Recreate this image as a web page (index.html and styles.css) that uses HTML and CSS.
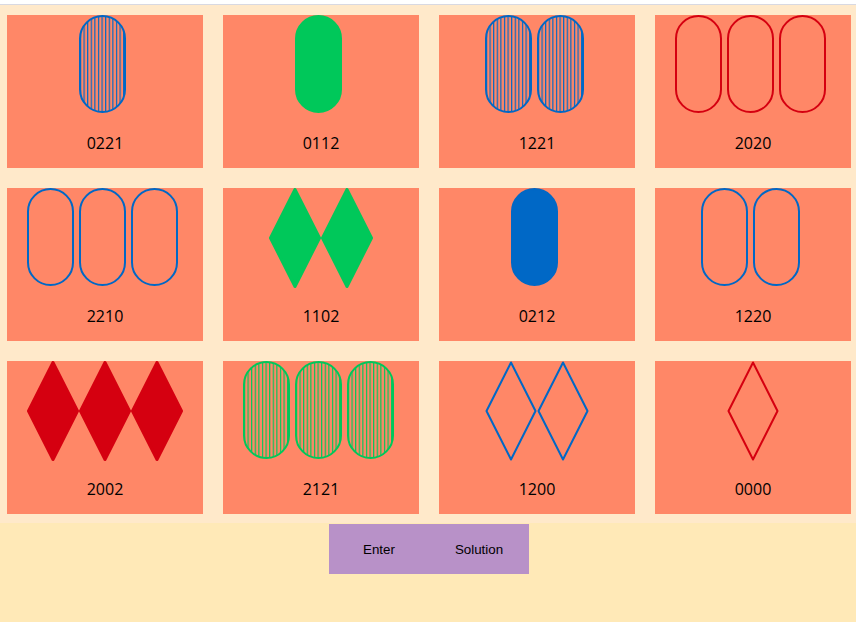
FILE: index.html
```html
<!DOCTYPE html>
<html>
<head>
<meta charset="utf-8">
<link rel="stylesheet" href="styles.css">
</head>
<body>
<svg class="defs" width="0" height="0">
  <defs>
    <pattern id="stripe-blue" patternUnits="userSpaceOnUse" width="3.6" height="4">
      <line x1="1.5" y1="0" x2="1.5" y2="4" stroke="#0068c6" stroke-width="1.2"/>
    </pattern>
    <pattern id="stripe-green" patternUnits="userSpaceOnUse" width="3.6" height="4">
      <line x1="1.5" y1="0" x2="1.5" y2="4" stroke="#00c85a" stroke-width="1.2"/>
    </pattern>
    <symbol id="pill" viewBox="0 0 52 98">
      <rect x="1" y="1" width="45" height="96" rx="22.5" ry="22.5"/>
    </symbol>
    <symbol id="diamond" viewBox="0 0 52 100">
      <polygon points="26,1.5 50.5,50 26,98.5 1.5,50"/>
    </symbol>
  </defs>
</svg>
<div class="board">
  <div class="card">
    <div class="shapes">
      <svg class="pill blue striped-blue"><use href="#pill"/></svg>
    </div>
    <div class="code">0221</div>
  </div>
  <div class="card">
    <div class="shapes">
      <svg class="pill green solid"><use href="#pill"/></svg>
    </div>
    <div class="code">0112</div>
  </div>
  <div class="card">
    <div class="shapes">
      <svg class="pill blue striped-blue"><use href="#pill"/></svg>
      <svg class="pill blue striped-blue"><use href="#pill"/></svg>
    </div>
    <div class="code">1221</div>
  </div>
  <div class="card">
    <div class="shapes">
      <svg class="pill red outline"><use href="#pill"/></svg>
      <svg class="pill red outline"><use href="#pill"/></svg>
      <svg class="pill red outline"><use href="#pill"/></svg>
    </div>
    <div class="code">2020</div>
  </div>

  <div class="card">
    <div class="shapes">
      <svg class="pill blue outline"><use href="#pill"/></svg>
      <svg class="pill blue outline"><use href="#pill"/></svg>
      <svg class="pill blue outline"><use href="#pill"/></svg>
    </div>
    <div class="code">2210</div>
  </div>
  <div class="card">
    <div class="shapes">
      <svg class="diamond green solid"><use href="#diamond"/></svg>
      <svg class="diamond green solid"><use href="#diamond"/></svg>
    </div>
    <div class="code">1102</div>
  </div>
  <div class="card">
    <div class="shapes">
      <svg class="pill blue solid"><use href="#pill"/></svg>
    </div>
    <div class="code">0212</div>
  </div>
  <div class="card">
    <div class="shapes">
      <svg class="pill blue outline"><use href="#pill"/></svg>
      <svg class="pill blue outline"><use href="#pill"/></svg>
    </div>
    <div class="code">1220</div>
  </div>

  <div class="card">
    <div class="shapes">
      <svg class="diamond red solid"><use href="#diamond"/></svg>
      <svg class="diamond red solid"><use href="#diamond"/></svg>
      <svg class="diamond red solid"><use href="#diamond"/></svg>
    </div>
    <div class="code">2002</div>
  </div>
  <div class="card">
    <div class="shapes">
      <svg class="pill green striped-green"><use href="#pill"/></svg>
      <svg class="pill green striped-green"><use href="#pill"/></svg>
      <svg class="pill green striped-green"><use href="#pill"/></svg>
    </div>
    <div class="code">2121</div>
  </div>
  <div class="card">
    <div class="shapes">
      <svg class="diamond blue outline"><use href="#diamond"/></svg>
      <svg class="diamond blue outline"><use href="#diamond"/></svg>
    </div>
    <div class="code">1200</div>
  </div>
  <div class="card">
    <div class="shapes">
      <svg class="diamond red outline"><use href="#diamond"/></svg>
    </div>
    <div class="code">0000</div>
  </div>
</div>
<div class="controls">
  <button class="btn">Enter</button><button class="btn">Solution</button>
</div>
</body>
</html>
```

FILE: styles.css
```css
html, body {
  margin: 0;
  padding: 0;
}
body {
  background: #ffffff;
  width: 856px;
  height: 622px;
  overflow: hidden;
}
.defs {
  display: block;
  width: 0;
  height: 0;
  overflow: hidden;
}
.board {
  margin-top: 4px;
  border-top: 1px solid #d8d9e2;
  background: #ffe9ca;
  padding: 10px 5px 9px 7px;
  display: grid;
  grid-template-columns: repeat(4, 196px);
  grid-auto-rows: 153px;
  column-gap: 20px;
  row-gap: 20px;
}
.card {
  background: #ff8767;
  display: flex;
  flex-direction: column;
  align-items: center;
}
.shapes {
  height: 100px;
  display: flex;
  justify-content: center;
  align-items: flex-start;
}
.shapes svg {
  display: block;
  width: 52px;
  overflow: visible;
}
.pill {
  height: 98px;
}
.diamond {
  height: 100px;
}
.shapes svg use {
  stroke-width: 2;
  stroke-linejoin: round;
}
.diamond.solid use {
  stroke-width: 3;
}
.blue { stroke: #0068c6; color: #0068c6; }
.green { stroke: #00c85a; color: #00c85a; }
.red { stroke: #d50010; color: #d50010; }
.solid { fill: currentColor; }
.outline { fill: none; }
.striped-blue { fill: url(#stripe-blue); }
.striped-green { fill: url(#stripe-green); }
.code {
  margin-top: 17px;
  line-height: 22px;
  font-family: "Open Sans", "Noto Sans", sans-serif;
  font-size: 16px;
  color: #000;
}
.controls {
  background: #ffe9b7;
  height: 99px;
  display: flex;
  justify-content: center;
  align-items: flex-start;
  padding-left: 2px;
  box-sizing: border-box;
}
.btn {
  margin-top: 1px;
  width: 100px;
  height: 50px;
  border: none;
  padding: 0;
  background: #b891c8;
  font-family: "Liberation Sans", Arial, sans-serif;
  font-size: 13.333px;
  color: #000;
}
```
